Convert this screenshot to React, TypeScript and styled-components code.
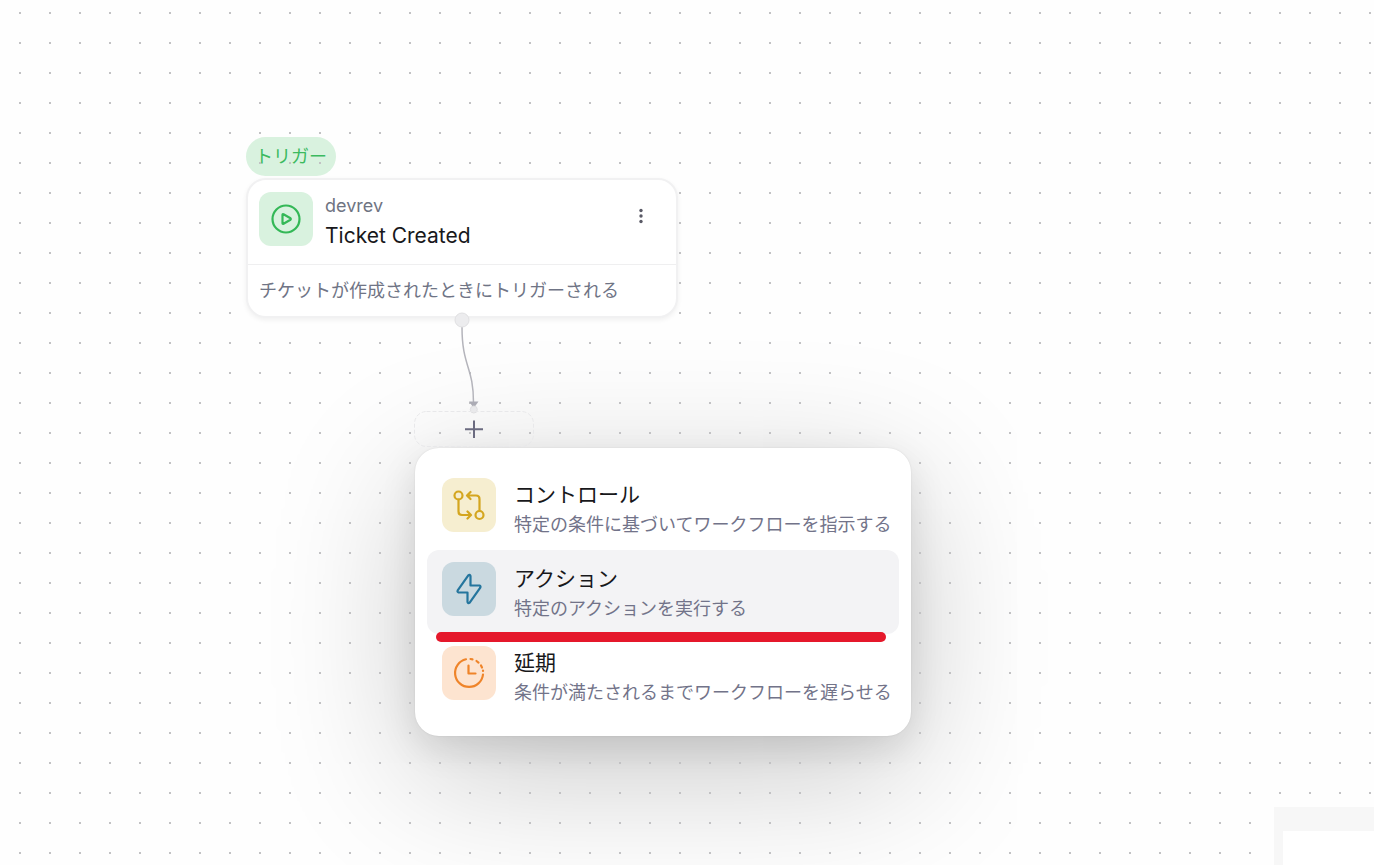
import React from "react";
import styled, { createGlobalStyle } from "styled-components";

const GlobalStyle = createGlobalStyle`
  *, *::before, *::after { box-sizing: border-box; }
  body {
    margin: 0;
    background: #ffffff;
    font-family: Inter, "Noto Sans CJK JP", sans-serif;
    color: #18181b;
  }
  button { font: inherit; color: inherit; border: 0; padding: 0; background: none; cursor: pointer; }
  h2, p { margin: 0; font-weight: 400; }
`;

const Canvas = styled.main`
  position: relative;
  min-height: 100vh;
  overflow: hidden;
  background-color: #fefefe;
`;

const DotGrid = styled.svg`
  position: absolute;
  inset: 0;
  width: 100%;
  height: 100%;
  pointer-events: none;
`;

const TriggerNode = styled.section`
  position: absolute;
  left: 246px;
  top: 137px;
  width: 432px;
  display: flex;
  flex-direction: column;
  align-items: flex-start;
  gap: 2px;
`;

const Tag = styled.span`
  padding: 0 9px;
  border-radius: 20px;
  background: #d9f2df;
  color: #3cba5f;
  font-size: 18px;
  line-height: 39px;
`;

const Card = styled.article`
  width: 100%;
  border: 2px solid #f1f1f2;
  border-radius: 20px;
  background: #ffffff;
  box-shadow: 0 2px 5px rgba(0, 0, 0, 0.06);
`;

const CardHeader = styled.header`
  display: flex;
  gap: 12px;
  height: 84px;
  padding: 12px 23px 0 11px;
`;

const IconTile = styled.span<{ $bg: string; $fg: string }>`
  flex: none;
  display: grid;
  place-items: center;
  width: 54px;
  height: 54px;
  border-radius: 12px;
  background: ${(p) => p.$bg};
  color: ${(p) => p.$fg};
`;

const Icon = styled.svg`
  display: block;
  fill: none;
  stroke: currentColor;
  stroke-width: 2.2;
  stroke-linecap: round;
  stroke-linejoin: round;
`;

const CardTitles = styled.div`
  flex: 1;
`;

const Source = styled.p`
  color: #6f7482;
  font-size: 18px;
  line-height: 28px;
`;

const CardTitle = styled.h2`
  font-size: 21px;
  line-height: 32px;
`;

const MoreButton = styled.button`
  width: 24px;
  height: 24px;
  margin-top: 12px;
  color: #5a5a66;
`;

const CardText = styled.p`
  padding: 0 11px;
  border-top: 1px solid #efeff0;
  color: #6f7485;
  font-size: 18px;
  line-height: 51px;
`;

const Edge = styled.svg`
  position: absolute;
  left: 444px;
  top: 310px;
`;

const AddNode = styled.button`
  position: absolute;
  left: 414px;
  top: 411px;
  width: 120px;
  height: 36px;
  display: grid;
  place-items: center;
  color: #6b6b80;
`;

const AddOutline = styled.svg`
  grid-area: 1 / 1;
`;

const Menu = styled.div`
  position: absolute;
  left: 415px;
  top: 448px;
  width: 496px;
  padding: 18px 12px;
  border-radius: 24px;
  background: #ffffff;
  box-shadow: 0 0 2px rgba(0, 0, 0, 0.1), 0 12px 36px rgba(0, 0, 0, 0.1),
    0 36px 144px rgba(0, 0, 0, 0.22);
`;

const MenuItem = styled.button<{ $active?: boolean }>`
  position: relative;
  display: flex;
  gap: 18px;
  width: 100%;
  height: 84px;
  padding: 12px 15px;
  border-radius: 12px;
  background: ${(p) => (p.$active ? "#f3f3f5" : "transparent")};
  text-align: left;
  white-space: nowrap;
`;

const ItemLabel = styled.span`
  padding-top: 1px;
`;

const ItemTitle = styled.span`
  display: block;
  font-size: 21px;
  line-height: 32px;
`;

const ItemText = styled.span`
  display: block;
  color: #727389;
  font-size: 18px;
  line-height: 28px;
`;

const Underline = styled.span`
  position: absolute;
  left: 9px;
  right: 13px;
  bottom: -8px;
  z-index: 1;
  height: 10px;
  border-radius: 5px;
  background: #e5182b;
`;

const MiniMap = styled.aside`
  position: absolute;
  right: 0;
  bottom: 0;
  width: 100px;
  height: 58px;
  padding: 24px 0 0 9px;
  background: #f7f7f7;
`;

const MiniMapView = styled.div`
  height: 100%;
  background: #ffffff;
`;

const ControlIcon = () => (
  <Icon width="36" height="36" viewBox="0 0 36 36" aria-hidden="true">
    <circle cx="7.5" cy="8.5" r="4" />
    <circle cx="28.5" cy="28" r="4" />
    <path d="M7.5 12.5V24.5Q7.5 28 11 28H19M16.500 24.500L20 28L16.500 31.500" />
    <path d="M28.500 24V12Q28.500 8.500 25 8.500H17M19.500 5L16 8.500L19.500 12" />
  </Icon>
);

const ActionIcon = () => (
  <Icon width="36" height="36" viewBox="0 0 36 36" aria-hidden="true">
    <path d="M17.300 4.400L6.700 19.400Q6 21 7.500 21.500H16.500V31Q17 33 18.700 31.600L29.300 16.600Q30 15 28.500 14.500H19.500V5Q19 3 17.300 4.400Z" />
  </Icon>
);

const DelayIcon = () => (
  <Icon width="36" height="36" viewBox="0 0 36 36" aria-hidden="true">
    <path d="M15 4.300A14 14 0 1 0 32 19.500" />
    <path d="M19.500 4L21.500 4.300M25.500 6L27.500 7.600M30 10.500L31 12.500M32 15.500V16" />
    <path d="M17.500 10.500V18.500H24.500" />
  </Icon>
);

const items = [
  { title: "コントロール", text: "特定の条件に基づいてワークフローを指示する", bg: "#f6eed0", fg: "#d4a61f", icon: <ControlIcon /> },
  { title: "アクション", text: "特定のアクションを実行する", bg: "#cad9e0", fg: "#24759d", icon: <ActionIcon />, active: true },
  { title: "延期", text: "条件が満たされるまでワークフローを遅らせる", bg: "#fde4d0", fg: "#ef8429", icon: <DelayIcon /> },
];

export default function App() {
  return (
    <>
      <GlobalStyle />
      <Canvas>
        <TriggerNode>
          <Tag>トリガー</Tag>
          <Card>
            <CardHeader>
              <IconTile $bg="#d9f2df" $fg="#34b857">
                <Icon width="36" height="36" viewBox="0 0 36 36" aria-hidden="true">
                  <circle cx="18" cy="18" r="13.500" />
                  <path d="M14.500 13.800V22.200Q14.500 23.200 15.500 22.700L22.500 18.700Q23.200 18 22.500 17.300L15.500 13.300Q14.500 12.800 14.500 13.800Z" />
                </Icon>
              </IconTile>
              <CardTitles>
                <Source>devrev</Source>
                <CardTitle>Ticket Created</CardTitle>
              </CardTitles>
              <MoreButton aria-label="メニュー">
                <svg width="24" height="24" viewBox="0 0 24 24" fill="currentColor">
                  <circle cx="12" cy="6.500" r="1.700" />
                  <circle cx="12" cy="12" r="1.700" />
                  <circle cx="12" cy="17.500" r="1.700" />
                </svg>
              </MoreButton>
            </CardHeader>
            <CardText>チケットが作成されたときにトリガーされる</CardText>
          </Card>
        </TriggerNode>

        <Menu>
          {items.map((item) => (
            <MenuItem key={item.title} $active={item.active}>
              <IconTile $bg={item.bg} $fg={item.fg}>{item.icon}</IconTile>
              <ItemLabel>
                <ItemTitle>{item.title}</ItemTitle>
                <ItemText>{item.text}</ItemText>
              </ItemLabel>
              {item.active && <Underline />}
            </MenuItem>
          ))}
        </Menu>

        <DotGridLayer />

        <Edge width="48" height="106" viewBox="0 0 48 106" fill="none" aria-hidden="true">
          <path d="M18 17C18 57 29.500 56 29.500 93" stroke="#b4b4bb" strokeWidth="1.500" />
          <path d="M25 91.500H34.500L29.800 98Z" fill="#acacb5" />
          <circle cx="18" cy="10" r="7" fill="#ececee" stroke="#e0e0e2" />
          <circle cx="29.800" cy="99.500" r="3.500" fill="#e9e9eb" stroke="#dfdfe1" />
        </Edge>

        <AddNode aria-label="追加">
          <AddOutline width="120" height="36" fill="none" aria-hidden="true">
            <rect x="0.500" y="0.500" width="119" height="35" rx="12" stroke="#e8e8ea" strokeDasharray="4 2" />
            <path d="M60 9.500V27M51 18.300H69" stroke="currentColor" strokeWidth="2" />
          </AddOutline>
        </AddNode>

        <MiniMap>
          <MiniMapView />
        </MiniMap>
      </Canvas>
    </>
  );
}

function DotGridLayer() {
  return (
    <DotGrid aria-hidden="true">
      <defs>
        <pattern id="dots" width="30" height="30" patternUnits="userSpaceOnUse">
          <rect x="19" y="12" width="2" height="2" fill="#c2c2c4" />
        </pattern>
        <mask id="free">
          <rect width="100%" height="100%" fill="#fff" />
          <rect x="246" y="178" width="432" height="140" rx="20" fill="#000" />
          <rect x="415" y="448" width="496" height="289" rx="24" fill="#000" />
        </mask>
      </defs>
      <rect width="100%" height="100%" fill="url(#dots)" mask="url(#free)" />
    </DotGrid>
  );
}
